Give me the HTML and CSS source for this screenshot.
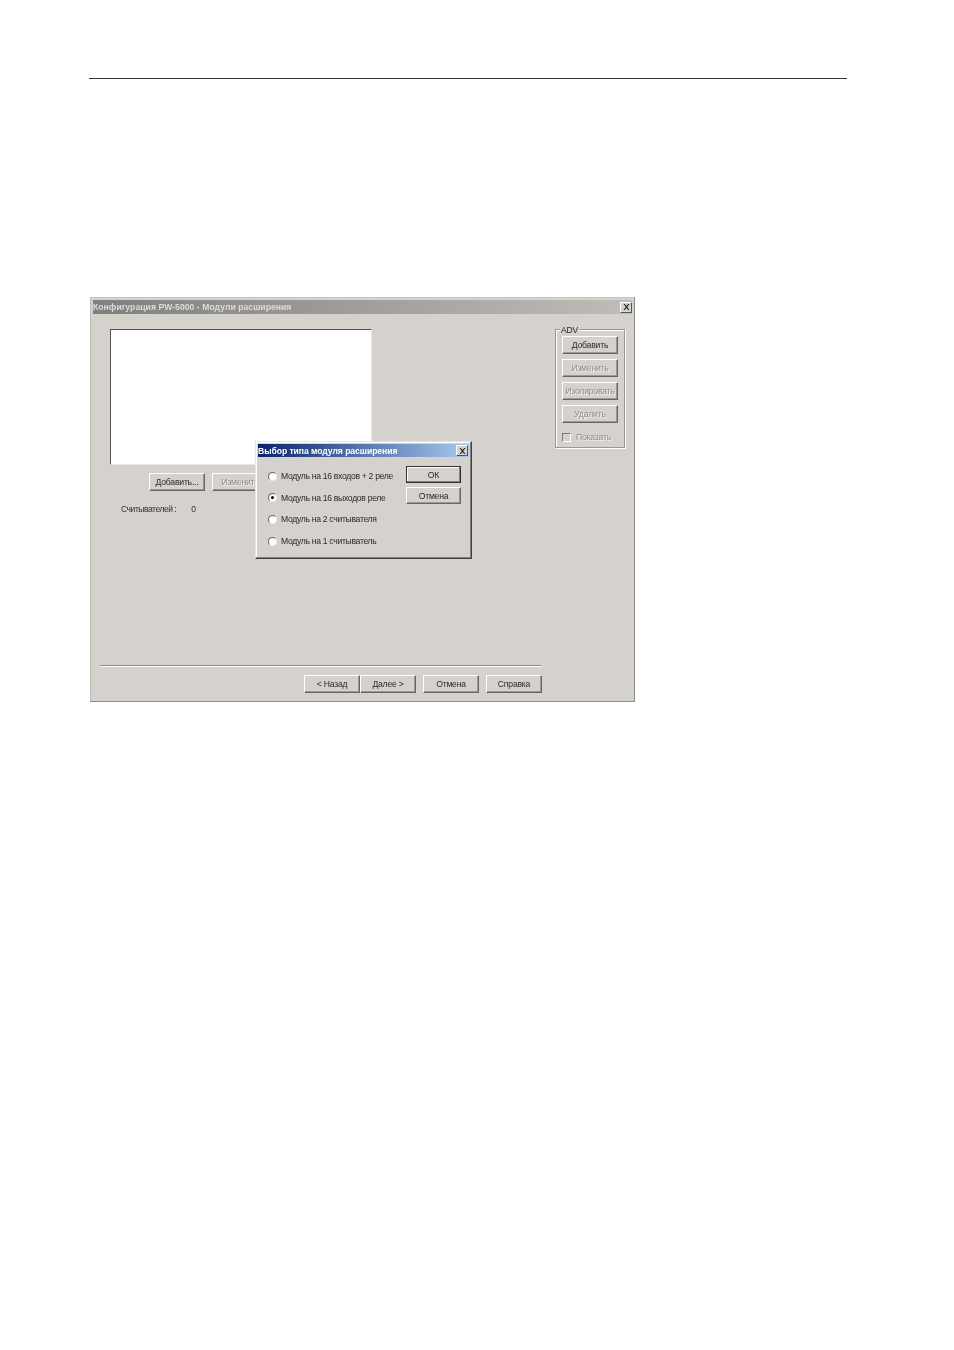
FILE: index.html
```html
<!DOCTYPE html>
<html lang="ru">
<head>
  <meta charset="UTF-8" />
  <title>Конфигурация PW-5000</title>
  <link rel="stylesheet" href="styles.css">
</head>
<body>
  <div class="page">
    <hr class="head-rule" />

    <div class="window">
      <div class="titlebar inactive">
        <span>Конфигурация PW-5000 - Модули расширения</span>
        <span class="close">
          <svg viewBox="0 0 8 7" width="7" height="6"><path d="M0.5 0L2 0L4 2.4L6 0L7.5 0L4.8 3.5L7.5 7L6 7L4 4.6L2 7L0.5 7L3.2 3.5Z" fill="#222"/></svg>
        </span>
      </div>

      <div class="content">
        <div class="main">
          <div class="listbox"></div>
          <div class="list-buttons">
            <div class="btn">Добавить...</div>
            <div class="btn disabled">Изменить</div>
          </div>
          <div class="counter"><span>Считывателей :</span><span>0</span></div>
          <div class="separator"></div>
          <div class="nav-buttons">
            <div class="nav-pair">
              <div class="btn">&lt; Назад</div>
              <div class="btn">Далее &gt;</div>
            </div>
            <div class="btn">Отмена</div>
            <div class="btn">Справка</div>
          </div>
        </div>

        <div class="group">
          <span class="group-label">ADV</span>
          <div class="btn">Добавить</div>
          <div class="btn disabled">Изменить</div>
          <div class="btn disabled">Изолировать</div>
          <div class="btn disabled">Удалить</div>
          <div class="check disabled"><span class="checkbox"></span>Показать</div>
        </div>
      </div>

      <div class="dialog">
        <div class="titlebar active">
          <span>Выбор типа модуля расширения</span>
          <span class="close">
            <svg viewBox="0 0 8 7" width="7" height="6"><path d="M0.5 0L2 0L4 2.4L6 0L7.5 0L4.8 3.5L7.5 7L6 7L4 4.6L2 7L0.5 7L3.2 3.5Z" fill="#222"/></svg>
          </span>
        </div>
        <div class="dialog-body">
          <div class="radios">
            <div class="radio-row"><span class="radio"></span>Модуль на 16 входов + 2 реле</div>
            <div class="radio-row"><span class="radio checked"></span>Модуль на 16 выходов реле</div>
            <div class="radio-row"><span class="radio"></span>Модуль на 2 считывателя</div>
            <div class="radio-row"><span class="radio"></span>Модуль на 1 считыватель</div>
          </div>
          <div class="dialog-buttons">
            <div class="btn default">ОК</div>
            <div class="btn">Отмена</div>
          </div>
        </div>
      </div>
    </div>
  </div>
</body>
</html>
```

FILE: styles.css
```css
* {
  box-sizing: border-box;
}
body {
  margin: 0;
  background: #fff;
  font-family: "Liberation Sans", Arial, sans-serif;
  font-size: 8.6px;
  letter-spacing: -0.2px;
  color: #2a2a2a;
}
.page {
  padding: 78px 107px 0 89px;
}
.head-rule {
  height: 1px;
  margin: 0 0 218px;
  border: 0;
  background: #333;
}
.window {
  position: relative;
  width: 545px;
  height: 405px;
  margin-left: 1px;
  padding: 2px 2px 0;
  background: #d5d2cd;
  border: 1px solid #8a8a86;
  border-top-color: #c9c5bc;
  border-left-color: #bdbab3;
  filter: blur(0.3px);
}
.titlebar {
  display: flex;
  justify-content: space-between;
  align-items: center;
  height: 14px;
  padding: 0;
  font-size: 8.6px;
  letter-spacing: 0.05px;
  font-weight: bold;
  white-space: nowrap;
}
.titlebar.inactive {
  color: #dcdcdc;
  background: linear-gradient(90deg, #808080, #c0bdb8);
}
.titlebar.active {
  height: 13px;
  padding: 0 1px 0 0;
  letter-spacing: -0.05px;
  color: #fff;
  background: linear-gradient(90deg, #0a246a, #a6caf0);
}
.close {
  display: flex;
  align-items: center;
  justify-content: center;
  width: 12px;
  height: 11px;
  background: #d5d2cd;
  border: 1px solid;
  border-color: #fff #555 #555 #fff;
}
.content {
  display: flex;
}
.main {
  width: 441px;
  margin-left: 7px;
}
.listbox {
  width: 262px;
  height: 136px;
  margin: 15px 0 0 10px;
  background: #fff;
  border: 1px solid;
  border-color: #555 #e8e6e1 #e8e6e1 #555;
}
.btn {
  display: flex;
  align-items: center;
  justify-content: center;
  width: 56px;
  height: 18px;
  background: #d5d2cd;
  border: 1px solid;
  border-color: #fff #666 #666 #fff;
  box-shadow: inset -1px -1px 0 #999;
  white-space: nowrap;
}
.btn.disabled {
  color: #8f8d88;
  text-shadow: 1px 1px 0 #f4f3f0;
}
.btn.default {
  border: 1px solid #333;
  box-shadow: inset -1px -1px 0 #808080, inset 1px 1px 0 #fff;
}
.dialog-buttons .btn {
  width: 55px;
  height: 17px;
}
.list-buttons {
  display: flex;
  gap: 7px;
  margin: 8px 0 0 49px;
}
.counter {
  display: flex;
  gap: 15px;
  margin: 9px 0 0 21px;
  height: 17px;
  align-items: center;
  color: #333;
  letter-spacing: -0.5px;
}
.separator {
  height: 2px;
  margin-top: 148px;
  background: #8a8a86;
  border-bottom: 1px solid #fff;
}
.nav-buttons {
  display: flex;
  justify-content: flex-end;
  gap: 7px;
  margin: 8px -1px 0 0;
}
.nav-pair {
  display: flex;
}
.group {
  position: relative;
  display: flex;
  flex-direction: column;
  gap: 5px;
  width: 70px;
  height: 119px;
  margin: 15px 0 0 14px;
  padding: 6px 6px 0;
  border: 1px solid #9a9892;
  box-shadow: 1px 1px 0 #fff, inset 1px 1px 0 #fff;
}
.group-label {
  position: absolute;
  top: -5px;
  left: 4px;
  padding: 0 1px;
  background: #d5d2cd;
}
.check {
  display: flex;
  align-items: center;
  gap: 5px;
  margin-top: 4px;
}
.check.disabled {
  color: #8f8d88;
  text-shadow: 1px 1px 0 #f4f3f0;
}
.checkbox {
  width: 9px;
  height: 9px;
  background: #d5d2cd;
  border: 1px solid;
  border-color: #777 #fff #fff #777;
}
.dialog {
  position: absolute;
  left: 164px;
  top: 143px;
  width: 217px;
  height: 118px;
  padding: 2px 2px 0;
  background: #d5d2cd;
  border: 1px solid;
  border-color: #e8e6e1 #404040 #404040 #e8e6e1;
  box-shadow: inset -1px -1px 0 #808080, inset 1px 1px 0 #fff;
}
.dialog-body {
  display: flex;
  justify-content: space-between;
  padding: 9px 8px 0 10px;
}
.radios {
  display: flex;
  flex-direction: column;
  gap: 3.7px;
  margin-top: 1px;
  letter-spacing: -0.3px;
}
.radio-row {
  display: flex;
  align-items: center;
  gap: 4px;
  height: 18px;
  white-space: nowrap;
}
.radio {
  display: flex;
  align-items: center;
  justify-content: center;
  width: 9px;
  height: 9px;
  background: #fff;
  border: 1px solid;
  border-color: #666 #eee #eee #666;
  border-radius: 50%;
}
.radio.checked::after {
  content: "";
  width: 3px;
  height: 3px;
  background: #000;
  border-radius: 50%;
}
.dialog-buttons {
  display: flex;
  flex-direction: column;
  gap: 4px;
}
```
